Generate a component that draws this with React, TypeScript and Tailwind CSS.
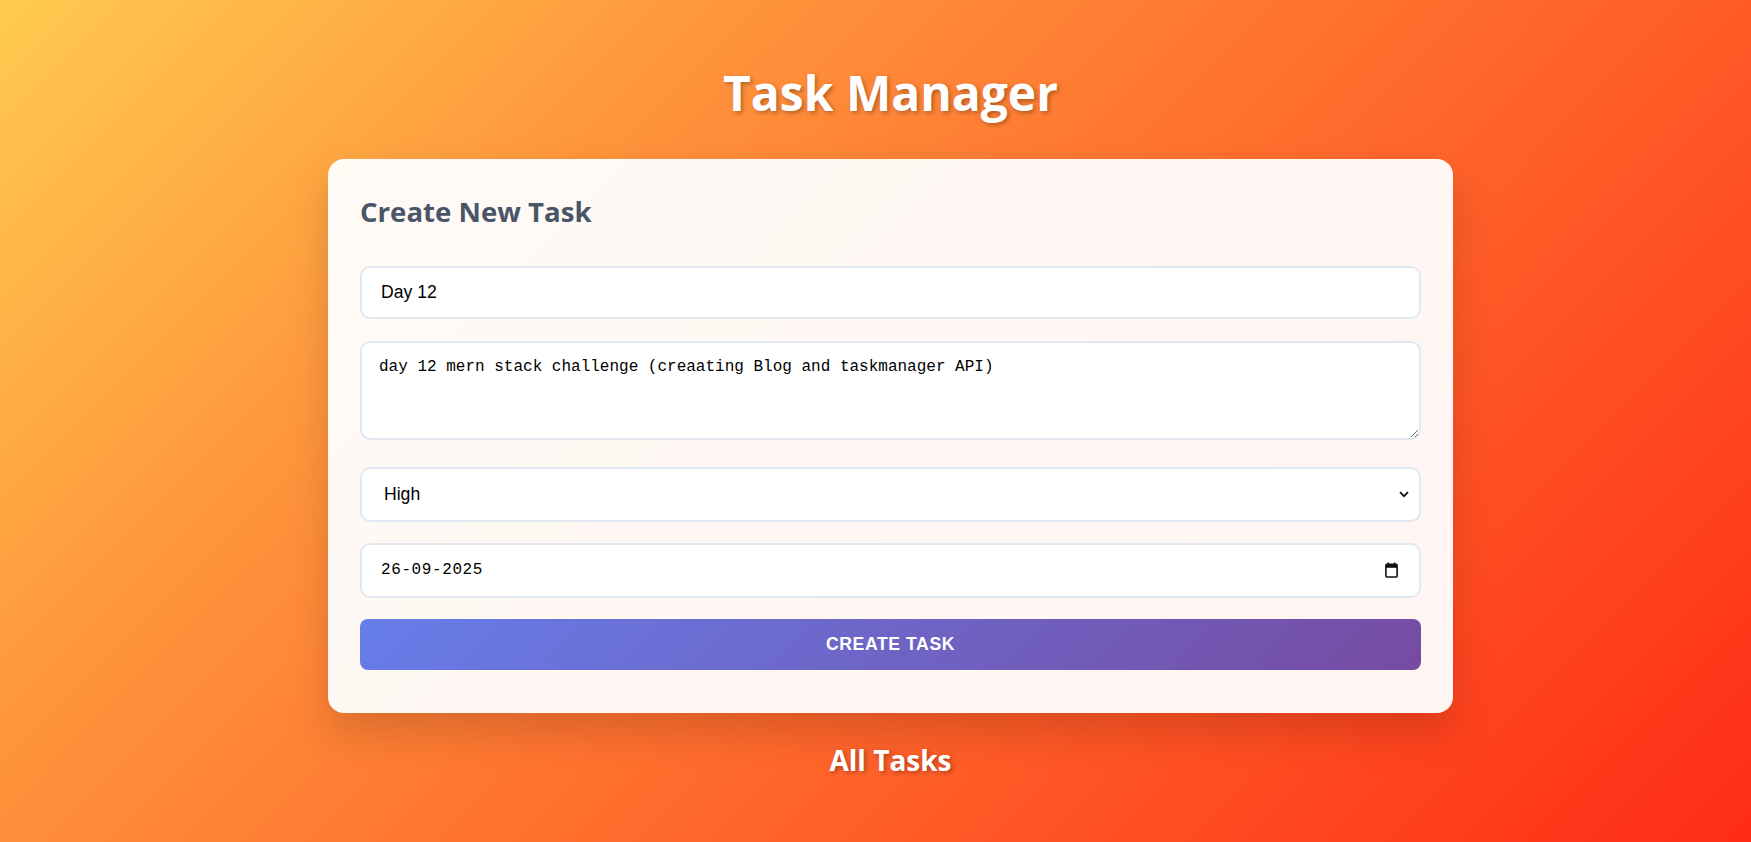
export default function App() {
  return (
    <div className="min-h-screen w-full bg-[linear-gradient(135deg,#ffca4f_0%,#ff8f3a_32%,#ff5a26_68%,#ff2c16_100%)] pl-[30px] pt-[64px] pb-10 font-['Open_Sans',sans-serif]">
      <h1 className="text-center text-[48px] leading-[1.2] font-bold text-white [text-shadow:2px_2px_4px_rgba(0,0,0,0.3)]">
        Task Manager
      </h1>

      <div className="mx-auto mt-[37px] w-[1125px] rounded-2xl bg-white/95 px-8 pt-8 pb-[43px] shadow-[0_20px_40px_rgba(0,0,0,0.15)]">
        <h2 className="mb-[34px] text-[27.6px] font-bold text-[#4a5568]">
          Create New Task
        </h2>

        <form className="flex flex-col" onSubmit={(e) => e.preventDefault()}>
          <input
            type="text"
            defaultValue="Day 12"
            className="h-[53px] rounded-[10px] border-2 border-[#e2e8f0] bg-white px-[19px] font-['Liberation_Sans',Arial,sans-serif] text-[17.6px] text-black outline-none"
          />

          <textarea
            defaultValue="day 12 mern stack challenge (creaating Blog and taskmanager API)"
            className="mt-[22px] h-[99px] rounded-[10px] border-2 border-[#e2e8f0] bg-white px-[17px] py-[15px] font-['Liberation_Mono',monospace] text-[16px] leading-[19px] text-black outline-none"
          />

          <div className="mt-[27px] flex h-[55px] items-center justify-between rounded-[10px] border-2 border-[#e2e8f0] bg-white pr-[10px] pl-[22px] font-['Liberation_Sans',Arial,sans-serif] text-[17.6px] text-black">
            <span>High</span>
            <svg width="10" height="7" viewBox="0 0 10 7" fill="none">
              <path d="M1 1.2 L5 5.2 L9 1.2" stroke="#111" strokeWidth="1.8" />
            </svg>
          </div>

          <div className="mt-[21px] flex h-[55px] items-center justify-between rounded-[10px] border-2 border-[#e2e8f0] bg-white pr-[21px] pl-[19px] font-['Liberation_Mono',monospace] text-[16px] text-black">
            <span className="tracking-[0.6px]">26-09-2025</span>
            <svg width="13" height="16" viewBox="0 0 13 16" fill="none">
              <rect x="2.5" y="0.5" width="1.6" height="3" fill="#111" />
              <rect x="8.9" y="0.5" width="1.6" height="3" fill="#111" />
              <rect x="0.9" y="2.4" width="11.2" height="12.6" rx="1" stroke="#111" strokeWidth="1.6" />
              <rect x="1" y="2.4" width="11" height="3.4" fill="#111" />
            </svg>
          </div>

          <button
            type="submit"
            className="mt-[21px] h-[51px] rounded-lg bg-[linear-gradient(135deg,#667eea_0%,#764ba2_100%)] font-['Liberation_Sans',Arial,sans-serif] text-[17.6px] font-bold tracking-[0.6px] text-white uppercase"
          >
            Create Task
          </button>
        </form>
      </div>

      <h2 className="mt-[26px] text-center text-[28px] font-bold text-white [text-shadow:2px_2px_4px_rgba(0,0,0,0.3)]">
        All Tasks
      </h2>
    </div>
  );
}
